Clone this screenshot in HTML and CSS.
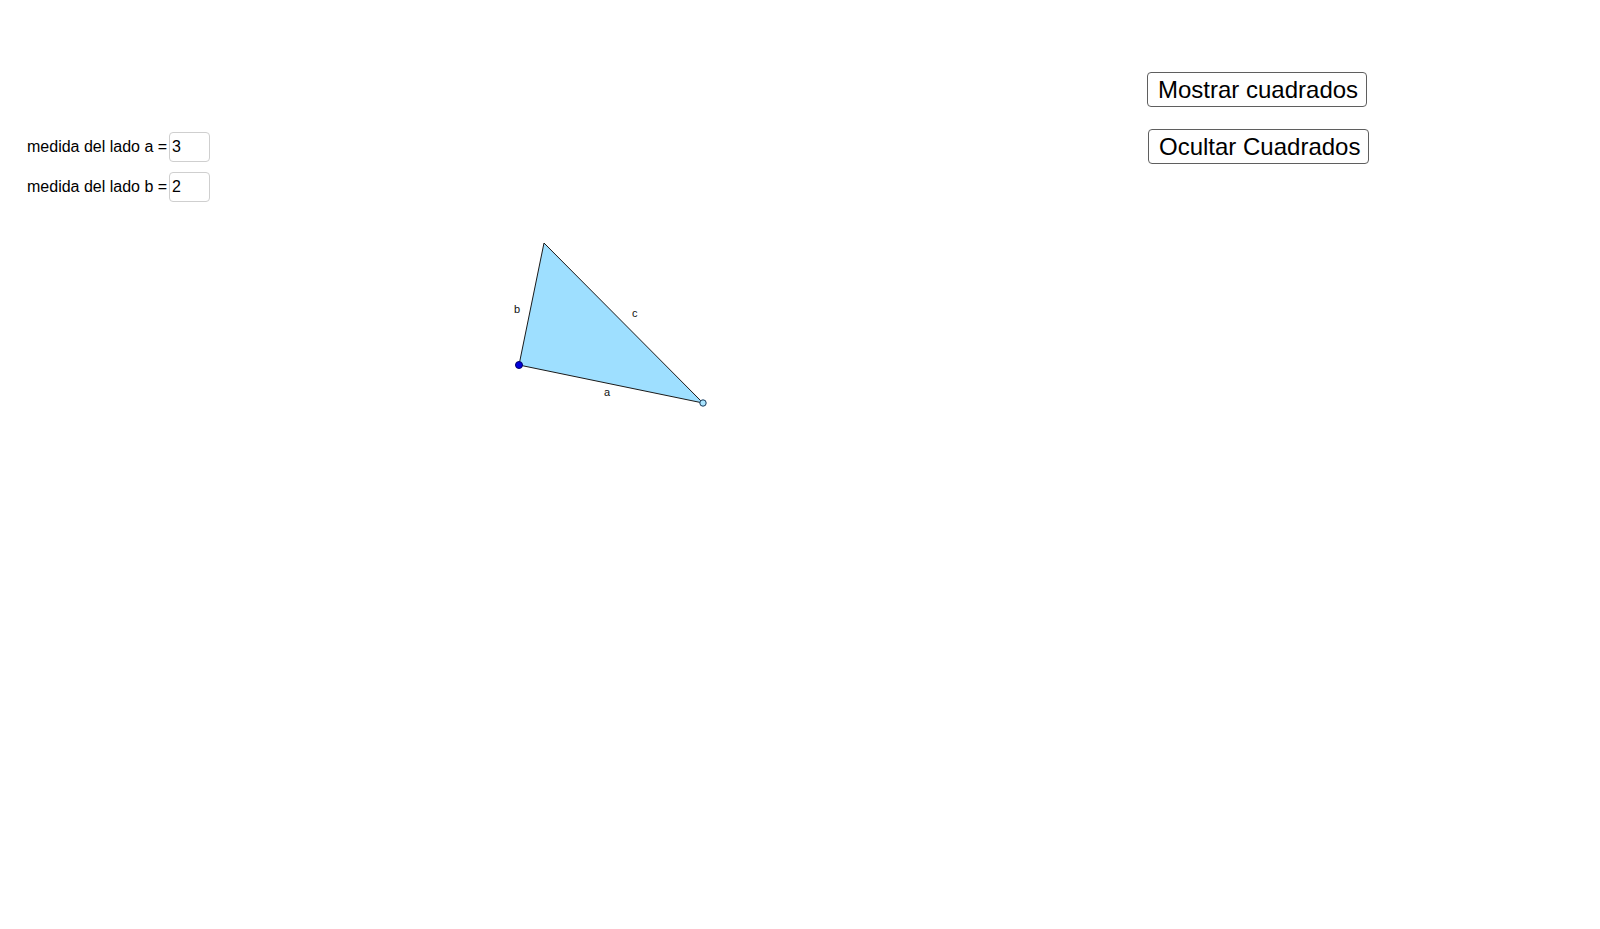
FILE: index.html
```html
<!DOCTYPE html>
<html>
<head>
<meta charset="utf-8">
<link rel="stylesheet" href="styles.css">
</head>
<body>
<div class="applet">
  <svg class="canvas" width="1600" height="929" viewBox="0 0 1600 929">
    <polygon points="544,243 519,365 703,403" fill="#9edfff" stroke="#1a1a1a" stroke-width="1"/>
    <text x="514" y="313" class="lbl">b</text>
    <text x="632" y="317" class="lbl">c</text>
    <text x="604" y="396" class="lbl">a</text>
    <circle cx="519" cy="365" r="3.5" fill="#0000dd" stroke="#000066" stroke-width="1"/>
    <circle cx="703" cy="403" r="3.2" fill="#a8e4ff" stroke="#1a3a5a" stroke-width="1"/>
  </svg>
  <div class="fields">
    <label class="field"><span class="caption">medida del lado a =</span><span class="input">3</span></label>
    <label class="field"><span class="caption">medida del lado b =</span><span class="input">2</span></label>
  </div>
  <div class="buttons">
    <button class="btn">Mostrar cuadrados</button>
    <button class="btn btn2">Ocultar Cuadrados</button>
  </div>
</div>
</body>
</html>
```
FILE: styles.css
```css
html, body {
  margin: 0;
  padding: 0;
  background: #fff;
}
.applet {
  position: relative;
  width: 1600px;
  height: 929px;
  overflow: hidden;
  font-family: "Liberation Sans", Arial, sans-serif;
}
.canvas {
  position: absolute;
  left: 0;
  top: 0;
}
.lbl {
  font-family: "Liberation Sans", Arial, sans-serif;
  font-size: 11px;
  fill: #111;
}
.fields {
  position: absolute;
  left: 27px;
  top: 132px;
  display: flex;
  flex-direction: column;
  gap: 10px;
}
.field {
  display: flex;
  align-items: center;
  font-size: 16px;
  color: #000;
  height: 30px;
}
.caption {
  margin-right: 2px;
}
.input {
  box-sizing: border-box;
  width: 41px;
  height: 30px;
  border: 1px solid #cfcfcf;
  border-radius: 4px;
  padding-left: 2px;
  display: flex;
  align-items: center;
  font-size: 16px;
}
.buttons {
  position: absolute;
  left: 1147px;
  top: 72px;
  display: flex;
  flex-direction: column;
  align-items: flex-start;
  gap: 22px;
}
.btn {
  box-sizing: border-box;
  height: 35px;
  padding: 0 8px 0 10px;
  border: 1.5px solid #5f5f5f;
  border-radius: 4px;
  background: #fff;
  font-family: "Liberation Sans", Arial, sans-serif;
  font-size: 24px;
  color: #000;
  line-height: 1;
}
.btn2 {
  margin-left: 1px;
}
```
